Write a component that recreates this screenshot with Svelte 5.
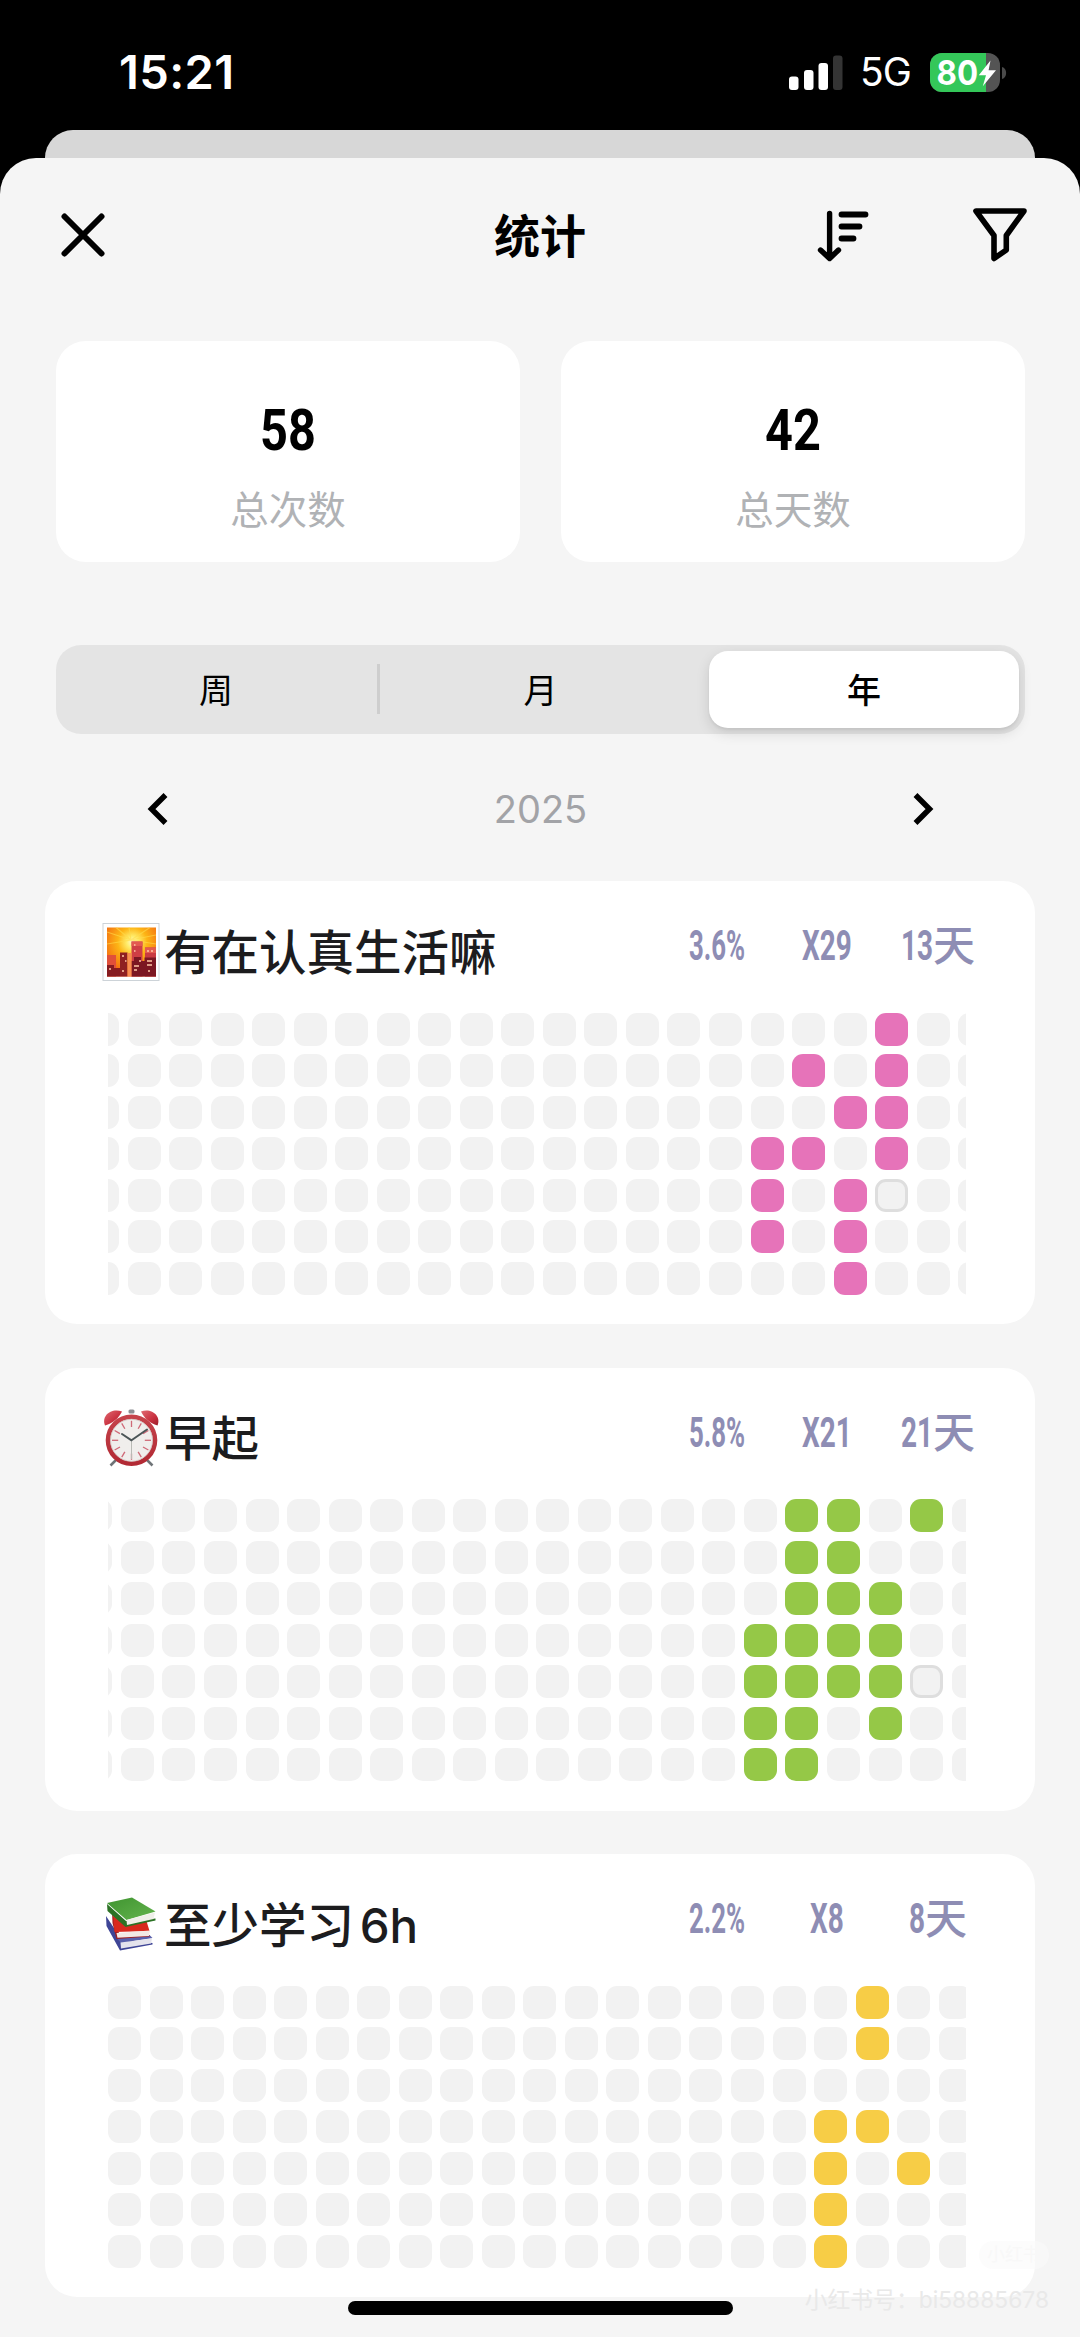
<script>
	let activeTab = '年';
	const tabs = ['周', '月', '年'];

	const totals = [
		{ value: '58', label: '总次数' },
		{ value: '42', label: '总天数' }
	];

	// filled: column -> rows (0 = top), today: [column, row]
	const habits = [
		{
			icon: 'sunset',
			name: '有在认真生活嘛',
			percent: '3.6%',
			count: 'X29',
			countWidth: 50,
			days: '13',
			daysWidth: 32,
			color: '#e673b9',
			offset: -22,
			columns: 22,
			filled: { 16: [3, 4, 5], 17: [1, 3], 18: [2, 4, 5, 6], 19: [0, 1, 2, 3] },
			today: [19, 4]
		},
		{
			icon: 'clock',
			name: '早起',
			percent: '5.8%',
			count: 'X21',
			countWidth: 50,
			days: '21',
			daysWidth: 32,
			color: '#95c847',
			offset: -28.6,
			columns: 22,
			filled: {
				16: [3, 4, 5, 6],
				17: [0, 1, 2, 3, 4, 5, 6],
				18: [0, 1, 2, 3, 4],
				19: [2, 3, 4, 5],
				20: [0]
			},
			today: [20, 4]
		},
		{
			icon: 'books',
			name: '至少学习 6h',
			percent: '2.2%',
			count: 'X8',
			countWidth: 34,
			days: '8',
			daysWidth: 16,
			color: '#f7cd46',
			offset: 0,
			columns: 21,
			filled: { 17: [3, 4, 5, 6], 18: [0, 1, 3], 19: [4] },
			today: null
		}
	];

	function cellsOf(habit) {
		const cells = [];
		for (let col = 0; col < habit.columns; col++) {
			for (let row = 0; row < 7; row++) {
				cells.push({
					filled: (habit.filled[col] || []).includes(row),
					today: habit.today && habit.today[0] === col && habit.today[1] === row
				});
			}
		}
		return cells;
	}
</script>

<div class="screen">
	<header class="status-bar">
		<span class="time">15:21</span>
		<div class="status-right">
			<svg class="signal" width="54" height="35" viewBox="0 0 54 35">
				<rect x="0" y="21.5" width="9.5" height="13.5" rx="3" fill="#fff" />
				<rect x="15" y="15" width="9.5" height="20" rx="3" fill="#fff" />
				<rect x="29.5" y="8" width="9.5" height="27" rx="3" fill="#fff" />
				<rect x="44" y="0.5" width="9.5" height="34.5" rx="3" fill="#343434" />
			</svg>
			<span class="network">5G</span>
			<svg class="battery" width="77" height="39" viewBox="0 0 77 39">
				<defs>
					<clipPath id="battery-body"><rect width="70" height="39" rx="12" /></clipPath>
				</defs>
				<g clip-path="url(#battery-body)">
					<rect width="70" height="39" fill="#545454" />
					<rect width="56" height="39" fill="#34c759" />
				</g>
				<path d="M72 14 C77.5 15 77.5 25 72 26 Z" fill="#4a4a4a" />
				<text x="6.5" y="32" class="battery-text" textLength="41.5" lengthAdjust="spacingAndGlyphs">80</text>
				<path d="M60.5 7.5 L48.8 22.2 H56 L52.8 33.2 L66 17.2 H58.6 Z" fill="#fff" />
			</svg>
		</div>
	</header>

	<div class="sheet-behind"></div>

	<main class="sheet">
		<div class="nav">
			<svg width="44" height="44" viewBox="0 0 44 44" class="line-icon">
				<path d="M3.5 3.5 L40.5 40.5 M40.5 3.5 L3.5 40.5" stroke-width="6" />
			</svg>
			<h1>统计</h1>
			<div class="nav-actions">
				<svg width="52" height="54" viewBox="0 0 52 54" class="line-icon">
					<path d="M12.6 5.5 V50 M3.5 42 L12.6 50.5 L21.5 42" stroke-width="5.4" />
					<path d="M24.5 6.5 H48.5 M24.5 18.5 H42.5 M24.5 30.5 H36.5" stroke-width="5.8" />
				</svg>
				<svg width="54" height="54" viewBox="0 0 54 54" class="line-icon">
					<path d="M3 3 H51 L33.3 27.5 V42 L21 50.5 V27.5 Z" stroke-width="5.6" />
				</svg>
			</div>
		</div>

		<div class="totals">
			{#each totals as total}
				<div class="total-card">
					<svg class="total-value" width="56" height="52" viewBox="0 0 56 52">
						<text transform="translate(0 48) scale(0.84 1)">{total.value}</text>
					</svg>
					<span class="total-label">{total.label}</span>
				</div>
			{/each}
		</div>

		<div class="segmented">
			{#each tabs as tab}
				<button class:active={tab === activeTab} on:click={() => (activeTab = tab)}>{tab}</button>
			{/each}
		</div>

		<div class="year-nav">
			<svg width="22" height="34" viewBox="0 0 22 34" class="chevron">
				<path d="M18.5 3 L4.5 17 L18.5 31" />
			</svg>
			<span>2025</span>
			<svg width="22" height="34" viewBox="0 0 22 34" class="chevron">
				<path d="M3.5 3 L17.5 17 L3.5 31" />
			</svg>
		</div>

		<div class="habits">
			{#each habits as habit}
				<section class="habit-card">
					<div class="habit-header">
						{#if habit.icon === 'sunset'}
							<svg width="60" height="60" viewBox="6 6 60 60">
								<defs>
									<radialGradient id="sun" cx="0.52" cy="0.3" r="0.75">
										<stop offset="0" stop-color="#fffbd0" />
										<stop offset="0.16" stop-color="#ffec6a" />
										<stop offset="0.4" stop-color="#fdb515" />
										<stop offset="0.75" stop-color="#f57a12" />
										<stop offset="1" stop-color="#e8501c" />
									</radialGradient>
								</defs>
								<rect x="7" y="8.5" width="56" height="57" fill="#fff" stroke="#cdd3d8" />
								<rect x="11" y="12.5" width="49" height="49" fill="url(#sun)" />
								<path
									d="M35 25 L11 17 M35 25 L20 12.5 M35 25 L11 29 M35 25 L54 12.5 M35 25 L60 20 M35 25 L60 29 M35 25 L33 12.5"
									stroke="#ffdc4a"
									stroke-width="1.2"
									opacity="0.6"
								/>
								<path d="M11 40 H20 V61.5 H11 Z" fill="#e0503a" />
								<path d="M35.5 26.5 H46.5 V61.5 H35.5 Z" fill="#cf3f45" />
								<path d="M49 32.5 H60 V61.5 H49 Z" fill="#c93a42" />
								<path d="M49 32.5 H60 V38 H49 Z M35.5 26.5 H46.5 V31 H35.5 Z" fill="#e35a50" />
								<path d="M24 37.5 H31.5 V61.5 H24 Z" fill="#8e1f22" />
								<path d="M35.5 46 H38 V42 H45 V46 H48.5 V42.5 H60 V61.5 H35.5 Z" fill="#7c1722" />
								<path d="M11 50 H18 V53 H24 V61.5 H11 Z" fill="#861c20" />
								<path d="M31.5 38 H35.5 V61.5 H31.5 Z" fill="#f88d52" />
								<path
									d="M26 41 H28 M29 46 H30.5 M38 30 H39.5 M38 36 H39.5 M43 46 H45 M38 51 H43 M38 55 H41 M51 36 H53 M55 36 H57 M51 46 H56 M51 50 H56 M13 54 H15 M26 56 H28 M52 56 H54"
									stroke="#ffc9a8"
									stroke-width="1.6"
								/>
							</svg>
						{:else if habit.icon === 'clock'}
							<svg width="60" height="60" viewBox="6 6 60 60">
								<defs>
									<linearGradient id="bell" x1="0" y1="0" x2="1" y2="1">
										<stop offset="0" stop-color="#e06a72" />
										<stop offset="0.6" stop-color="#c9303f" />
										<stop offset="1" stop-color="#9b1d2a" />
									</linearGradient>
									<linearGradient id="rim" x1="0" y1="0" x2="0" y2="1">
										<stop offset="0" stop-color="#c5434b" />
										<stop offset="1" stop-color="#b22a34" />
									</linearGradient>
								</defs>
								<path d="M21 57 L14.5 63.5 M50 57 L56.5 63.5" stroke="#6f7478" stroke-width="2.6" />
								<rect x="32.5" y="7.5" width="6" height="4" rx="1.5" fill="#8d8f94" />
								<path d="M9 23.5 C5 14 15 5.5 26 9.5 C23 16 17 21 9 23.5 Z" fill="url(#bell)" />
								<path d="M61.5 23.5 C65.5 14 55.5 5.5 45 9.5 C48 16 53.5 21 61.5 23.5 Z" fill="url(#bell)" />
								<circle cx="35.5" cy="38.3" r="23.5" fill="#f0eeec" stroke="url(#rim)" stroke-width="4.6" />
								<circle cx="35.5" cy="38.3" r="21" fill="none" stroke="#d3c4c3" stroke-width="0.8" />
								<g stroke="#cf6a78" stroke-width="1.3">
									{#each [0, 30, 60, 90, 120, 150, 180, 210, 240, 270, 300, 330] as angle}
										<path d="M35.5 18.8 V25" transform="rotate({angle} 35.5 38.3)" />
									{/each}
								</g>
								<path d="M35.5 38.3 V57" stroke="#b9bab5" />
								<path d="M35.5 38.3 L26 32 M35.5 38.3 L51 27.5" stroke="#4b5557" stroke-width="2" stroke-linecap="round" />
							</svg>
						{:else}
							<svg width="60" height="60" viewBox="0 0 60 60">
								<defs>
									<linearGradient id="cover" x1="0" y1="0" x2="1" y2="1">
										<stop offset="0" stop-color="#3f9430" />
										<stop offset="1" stop-color="#64b44e" />
									</linearGradient>
								</defs>
								<path d="M4 22 L4.5 32 L18 56.5 L50.5 50.5 V49 L20 46 Z" fill="#3e4596" />
								<path d="M15 44.5 L47.5 41 L50.5 44 L19 49 Z" fill="#5960ab" />
								<path d="M18.5 48.5 L50 44.5 L49 49.5 L19 54.5 Z" fill="#e4e3ec" />
								<path d="M10 17 L10.5 29 L14.5 45 L47.5 42.5 V41 L17 39 Z" fill="#9f1f22" />
								<path d="M11 20 L24 30 L44 25.500 L47.5 37 L12.5 38 Z" fill="#d8291e" />
								<path d="M14.500 39 L48 36.5 L47 42 L15.500 43.8 Z" fill="#f2e9e4" />
								<path d="M5 10 L5.5 17 L23.5 33 L53.5 26.500 V24.500 L24 27 Z" fill="#2c7225" />
								<path d="M5 9 L30 3.5 L53.5 17.5 L24.5 26 Z" fill="url(#cover)" />
								<path d="M24.5 26 L53 18.5 L51.5 25 L25 31 Z" fill="#efefe9" />
							</svg>
						{/if}
						<h2>{habit.name}</h2>
						<div class="stats">
							<svg width="56" height="44">
								<text transform="translate(0 35) scale(0.6 1)">{habit.percent}</text>
							</svg>
							<svg width={habit.countWidth} height="44">
								<text transform="translate(0 35) scale(0.65 1)">{habit.count}</text>
							</svg>
							<svg width={habit.daysWidth + 42} height="44">
								<text transform="translate(0 35) scale(0.65 1)">{habit.days}</text>
								<text class="unit" x={habit.daysWidth} y="35.5">天</text>
							</svg>
						</div>
					</div>
					<div class="heatmap">
						<div class="cells" style="margin-left: {habit.offset}px; --fill: {habit.color}">
							{#each cellsOf(habit) as cell}
								<i class:filled={cell.filled} class:today={cell.today}></i>
							{/each}
						</div>
					</div>
				</section>
			{/each}
		</div>
	</main>

	<div class="home-indicator"></div>
	<div class="watermark">
		<span class="watermark-logo">小红书</span>
		<span class="watermark-id">小红书号：bi58885678</span>
	</div>
</div>

<style>
	:global(body) {
		background: #000;
	}

	.screen {
		position: relative;
		display: flex;
		flex-direction: column;
		width: 1080px;
		height: 2337px;
		overflow: hidden;
		background: #000;
		font-family: Inter, 'Noto Sans CJK SC', sans-serif;
	}

	.status-bar {
		display: flex;
		justify-content: space-between;
		height: 130px;
		flex: none;
		box-sizing: border-box;
		padding: 44px 73px 0 119px;
		color: #fff;
	}

	.time {
		font-size: 47px;
		line-height: 56px;
		font-weight: 600;
		letter-spacing: 0.4px;
	}

	.status-right {
		display: flex;
		align-items: center;
		height: 56px;
	}

	.signal {
		margin-right: 17px;
	}

	.network {
		width: 51px;
		font-size: 39px;
		line-height: 56px;
		letter-spacing: -1px;
		white-space: nowrap;
	}

	.battery {
		margin-left: 19px;
	}

	.battery-text {
		font: 700 34px Inter, sans-serif;
		fill: #fff;
	}

	.sheet-behind {
		flex: none;
		height: 28px;
		margin: 0 45px;
		border-radius: 28px 28px 0 0;
		background: #d7d7d7;
	}

	.sheet {
		flex: 1;
		border-radius: 36px 36px 0 0;
		background: #f5f5f5;
	}

	.nav {
		display: grid;
		grid-template-columns: 1fr auto 1fr;
		align-items: center;
		height: 154px;
		padding: 0 53px 0 61px;
	}

	.nav h1 {
		margin: 2px 0 0 -8px;
		font-size: 46px;
		line-height: 60px;
		font-weight: 700;
	}

	.nav-actions {
		display: flex;
		justify-content: flex-end;
		gap: 104px;
	}

	.line-icon {
		fill: none;
		stroke: #000;
		stroke-linecap: round;
		stroke-linejoin: round;
	}

	.totals {
		display: grid;
		grid-template-columns: 1fr 1fr;
		gap: 41px;
		margin: 29px 55px 0 56px;
	}

	.total-card {
		display: flex;
		flex-direction: column;
		align-items: center;
		height: 221px;
		box-sizing: border-box;
		padding-top: 61px;
		border-radius: 30px;
		background: #fff;
	}

	svg {
		flex: none;
		overflow: visible;
	}

	.total-value text {
		font: 700 58px Roboto, sans-serif;
	}

	.total-label {
		margin-top: 25px;
		font-family: 'Noto Sans CJK SC', sans-serif;
		font-size: 38.5px;
		line-height: 56px;
		color: #b0b2b5;
	}

	.segmented {
		display: grid;
		grid-template-columns: repeat(3, 1fr);
		height: 89px;
		box-sizing: border-box;
		margin: 83px 55px 0 56px;
		padding: 6px;
		border-radius: 25px;
		background: #e4e4e4;
	}

	.segmented button {
		position: relative;
		padding: 0 0 2px;
		border: 0;
		border-radius: 19px;
		background: none;
		color: #000;
		font: 400 34px 'Noto Sans CJK SC', sans-serif;
	}

	.segmented button:first-child {
		padding-right: 11px;
	}

	.segmented button:first-child::after {
		content: '';
		position: absolute;
		top: 13px;
		right: 1px;
		width: 3px;
		height: 50px;
		background: #cecece;
	}

	.segmented .active {
		margin-left: 9px;
		background: #fff;
		font-weight: 500;
		box-shadow: 0 5px 14px rgba(0, 0, 0, 0.12), 0 2px 3px rgba(0, 0, 0, 0.05);
	}

	.year-nav {
		display: flex;
		justify-content: space-between;
		align-items: center;
		height: 50px;
		margin: 50px 146px 0 147px;
		font-size: 38px;
		color: #a2a3a7;
	}

	.chevron {
		fill: none;
		stroke: #000;
		stroke-width: 5.5;
	}

	.habits {
		display: flex;
		flex-direction: column;
		gap: 43.6px;
		margin: 47px 45px 0;
	}

	.habit-card {
		height: 443px;
		box-sizing: border-box;
		padding: 40px 42px 0 57px;
		border-radius: 32px;
		background: #fff;
	}

	.habit-header {
		display: flex;
		align-items: center;
		height: 60px;
	}

	.habit-header h2 {
		margin: 3px auto 0 2px;
		font-size: 47.5px;
		line-height: 60px;
		font-weight: 500;
		word-spacing: -7px;
		color: #1c1c1e;
		white-space: nowrap;
	}

	.stats {
		display: grid;
		grid-template-columns: repeat(3, 110.5px);
		justify-items: center;
		margin-top: -8px;
	}

	.stats text {
		font: 700 43px Roboto, sans-serif;
		fill: #8e8db4;
	}

	.stats .unit {
		font: 500 42px 'Noto Sans CJK SC', sans-serif;
	}

	.heatmap {
		width: 858px;
		margin: 31.5px 0 0 6px;
		overflow: hidden;
	}

	.cells {
		display: grid;
		grid-auto-flow: column;
		grid-template-rows: repeat(7, 33px);
		grid-auto-columns: 33px;
		gap: 8.54px;
	}

	.cells i {
		box-sizing: border-box;
		border-radius: 11px;
		background: #f2f2f2;
	}

	.cells .filled {
		background: var(--fill);
	}

	.cells .today {
		border: 3px solid #dedede;
	}

	.home-indicator {
		position: absolute;
		left: 348px;
		bottom: 22px;
		width: 385px;
		height: 14px;
		border-radius: 7px;
		background: #000;
	}

	.watermark {
		position: absolute;
		right: 31px;
		bottom: 21px;
		display: flex;
		flex-direction: column;
		align-items: flex-end;
		font-family: Inter, 'Noto Sans CJK SC', sans-serif;
	}

	.watermark-logo {
		margin-bottom: 15px;
		padding: 0 8px;
		border-radius: 14px;
		background: rgba(250, 250, 250, 0.6);
		font-size: 18px;
		line-height: 28px;
		color: #f8f8f8;
	}

	.watermark-id {
		font-size: 22.8px;
		line-height: 32px;
		color: #e9e9e9;
		white-space: nowrap;
	}
</style>
